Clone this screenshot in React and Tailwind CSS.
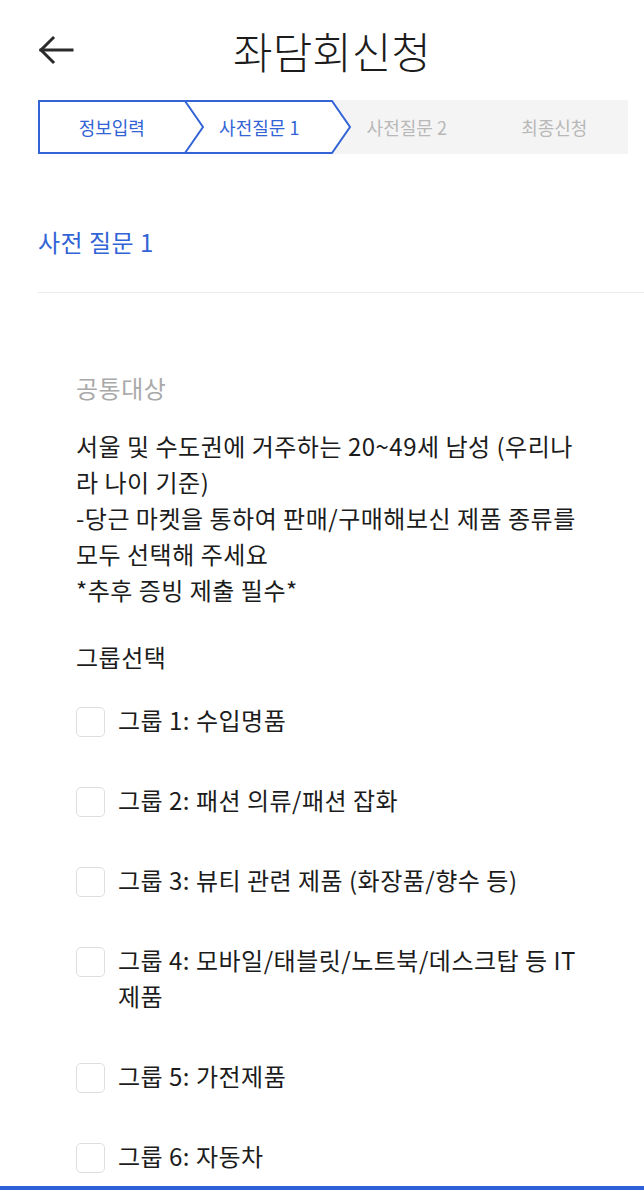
import { useState } from "react";

const steps = [
  { label: "정보입력", active: true },
  { label: "사전질문 1", active: true },
  { label: "사전질문 2", active: false },
  { label: "최종신청", active: false },
];

const groups = [
  "그룹 1: 수입명품",
  "그룹 2: 패션 의류/패션 잡화",
  "그룹 3: 뷰티 관련 제품 (화장품/향수 등)",
  "그룹 4: 모바일/태블릿/노트북/데스크탑 등 IT 제품",
  "그룹 5: 가전제품",
  "그룹 6: 자동차",
];

const font = { fontFamily: "'Noto Sans CJK KR', 'Noto Sans', sans-serif" };

const App = () => {
  const [checked, setchecked] = useState([]);

  const toggle = (i) => {
    setchecked((prev) => (prev.includes(i) ? prev.filter((x) => x !== i) : [...prev, i]));
  };

  return (
    <div className="w-[644px] h-[1190px] bg-white flex flex-col overflow-hidden" style={font}>
      {/* header */}
      <div className="h-[100px] flex items-center pl-[38px] pr-[54px]">
        <svg width="36" height="30" viewBox="0 0 36 30" fill="none" stroke="#2b2b2b" strokeWidth="3" strokeLinecap="square">
          <path d="M3 15H34" />
          <path d="M15 3L3 15L15 27" />
        </svg>
        <h1 className="flex-1 text-center text-[43px] font-light text-[#1c1c1c] leading-none">좌담회신청</h1>
      </div>

      {/* stepper */}
      <div className="relative ml-[38px] w-[590px] h-[54px] flex">
        <svg className="absolute inset-0" width="590" height="54" viewBox="0 0 590 54">
          <rect x="0" y="0" width="590" height="54" fill="#f4f4f4" />
          <path d="M0 0H294L312 27L294 54H0Z" fill="#fff" />
          <path d="M1 1H294L312 27L294 53H1Z" fill="none" stroke="#3264d6" strokeWidth="2" strokeLinejoin="miter" />
          <path d="M147 1L165 27L147 53" fill="none" stroke="#3264d6" strokeWidth="2" />
        </svg>
        {steps.map((s, i) => (
          <div
            key={i}
            className={`relative w-1/4 flex items-center justify-center text-[18px] ${s.active ? "text-[#3264d6]" : "text-[#b8b8b8]"}`}
          >
            {s.label}
          </div>
        ))}
      </div>

      {/* section title */}
      <div className="pl-[38px] mt-[72px] text-[24px] tracking-[0.5px] leading-[32px] text-[#3264d6]">사전 질문 1</div>
      <div className="ml-[38px] mt-[34px] h-px bg-[#ececec]" />

      {/* body */}
      <div className="pl-[76px] pr-[52px] pt-[80px] text-[#1c1c1c] tracking-[0.5px]">
        <div className="text-[24px] leading-[30px] text-[#a9a9a9]">공통대상</div>
        <p className="mt-[25px] text-[24px] leading-[36px]">
          서울 및 수도권에 거주하는 20~49세 남성 (우리나라 나이 기준)
          <br />
          -당근 마켓을 통하여 판매/구매해보신 제품 종류를 모두 선택해 주세요
          <br />
          *추후 증빙 제출 필수*
        </p>
        <div className="mt-[31px] text-[24px] leading-[36px]">그룹선택</div>

        <div className="mt-[27px] flex flex-col gap-[44px]">
          {groups.map((g, i) => (
            <label key={i} className="flex items-start gap-[13px] cursor-pointer" onClick={() => toggle(i)}>
              <span
                className={`mt-[5px] shrink-0 w-[29px] h-[30px] rounded-[5px] border-[1.5px] ${checked.includes(i) ? "border-[#3264d6] bg-[#3264d6]" : "border-[#dedede] bg-white"}`}
              />
              <span className="text-[24px] leading-[36px]">{g}</span>
            </label>
          ))}
        </div>
      </div>

      <div className="mt-auto h-[4px] bg-[#2d5fd6]" />
    </div>
  );
};

export default App;
